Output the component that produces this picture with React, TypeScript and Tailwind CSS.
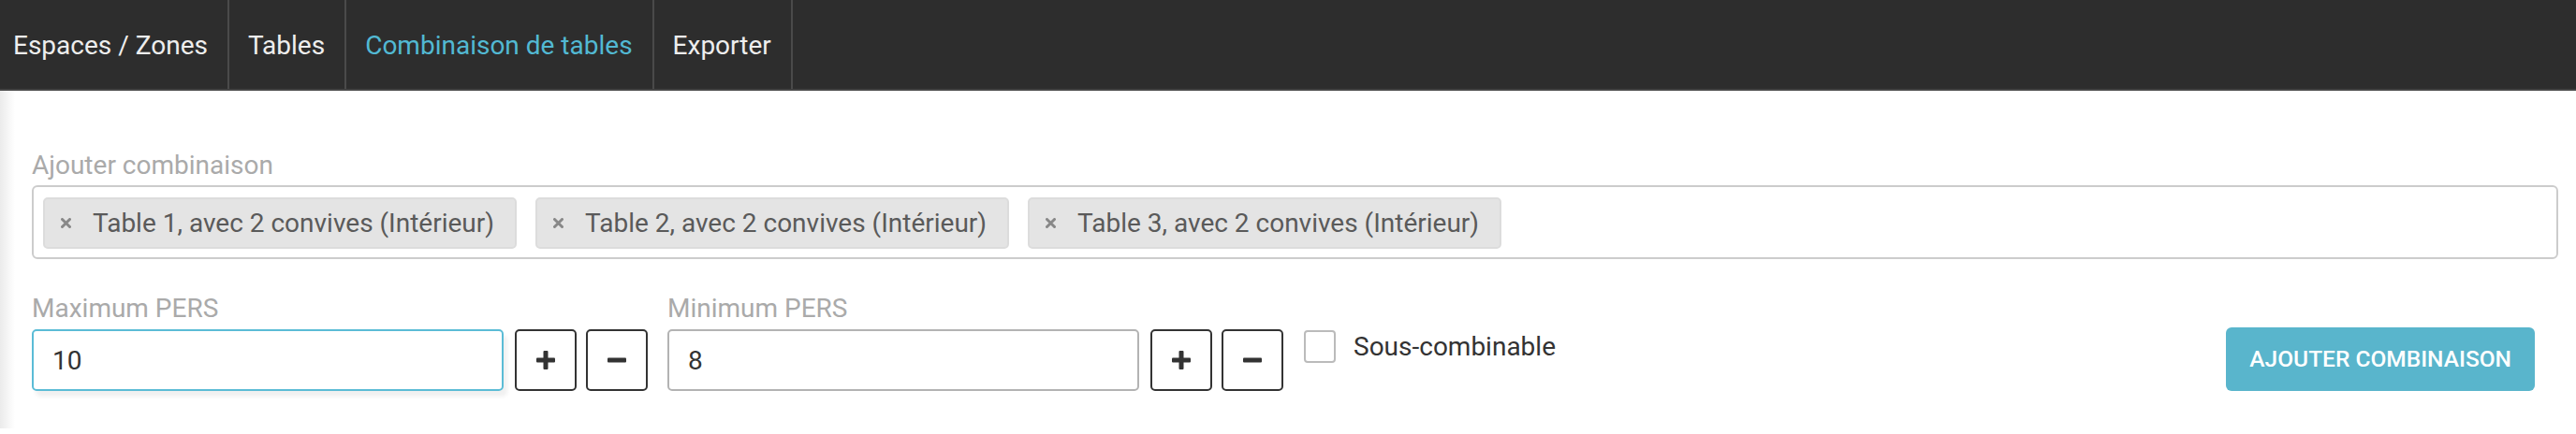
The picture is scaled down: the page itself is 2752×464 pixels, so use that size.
import React, { useState } from 'react';

const tabs = ['Espaces / Zones', 'Tables', 'Combinaison de tables', 'Exporter'];

const tags = [
  'Table 1, avec 2 convives (Intérieur)',
  'Table 2, avec 2 convives (Intérieur)',
  'Table 3, avec 2 convives (Intérieur)',
];

const PlusIcon = () => (
  <svg width="20" height="20" viewBox="0 0 20 20" fill="#333">
    <rect x="7.5" y="0" width="5" height="20" rx="1" />
    <rect x="0" y="7.5" width="20" height="5" rx="1" />
  </svg>
);

const MinusIcon = () => (
  <svg width="20" height="20" viewBox="0 0 20 20" fill="#333">
    <rect x="0" y="7.5" width="20" height="5" rx="1" />
  </svg>
);

const CrossIcon = () => (
  <svg width="11" height="11" viewBox="0 0 11 11" stroke="#888" strokeWidth="3" strokeLinecap="round">
    <path d="M1.5 1.5l8 8M9.5 1.5l-8 8" />
  </svg>
);

const StepButton = ({ children, onClick }: { children: React.ReactNode; onClick: () => void }) => (
  <button
    onClick={onClick}
    className="w-[66px] h-[66px] shrink-0 flex items-center justify-center bg-white border-2 border-[#333] rounded-[5px]"
  >
    {children}
  </button>
);

const NumberField = ({
  label,
  value,
  setValue,
  focused,
}: {
  label: string;
  value: number;
  setValue: (v: number) => void;
  focused?: boolean;
}) => (
  <div className="flex flex-col">
    <label className="text-[28px] leading-[36px] text-[#aaa] mb-[4px]">{label}</label>
    <div className="flex items-center">
      <input
        value={value}
        onChange={e => setValue(Number(e.target.value) || 0)}
        className={`w-[504px] h-[66px] px-[20px] text-[28px] text-[#333] rounded-[5px] border-2 outline-none ${
          focused ? 'border-[#5bbcd6] shadow-[4px_6px_4px_rgba(0,0,0,0.06)]' : 'border-[#b3b3b3]'
        }`}
      />
      <div className="flex items-center gap-[10px] ml-[12px]">
        <StepButton onClick={() => setValue(value + 1)}>
          <PlusIcon />
        </StepButton>
        <StepButton onClick={() => setValue(Math.max(0, value - 1))}>
          <MinusIcon />
        </StepButton>
      </div>
    </div>
  </div>
);

export default function App() {
  const [active, setActive] = useState(2);
  const [items, setItems] = useState(tags);
  const [max, setMax] = useState(10);
  const [min, setMin] = useState(8);
  const [sub, setSub] = useState(false);

  return (
    <div className="min-h-[464px] bg-white font-['Roboto','Liberation_Sans',sans-serif]">
      <nav className="flex h-[97px] bg-[#2d2d2d] border-b-2 border-[#444]">
        {tabs.map((t, i) => (
          <button
            key={t}
            onClick={() => setActive(i)}
            className={`h-full flex items-center pt-[2px] pr-[21px] border-r-2 border-[#4a4a4a] text-[28px] ${
              i === 0 ? 'pl-[14px]' : 'pl-[20px]'
            } ${active === i ? 'text-[#52b9d3]' : 'text-[#eeeeee]'}`}
          >
            {t}
          </button>
        ))}
      </nav>

      <main className="pt-[62px] pb-[40px] pl-[34px] pr-[19px] bg-[linear-gradient(to_right,#ebebeb_0px,#ffffff_16px)]">
        <label className="block text-[28px] leading-[36px] text-[#aaa] mb-[3px]">Ajouter combinaison</label>
        <div className="h-[79px] flex items-start gap-[20px] pt-[11px] pl-[10px] border-2 border-[#ccc] rounded-[6px] bg-white">
          {items.map(t => (
            <span
              key={t}
              className="h-[55px] flex items-center pl-[17px] pr-[22px] bg-[#e4e4e4] border-2 border-[#dcdcdc] rounded-[5px] text-[28px] text-[#5a5a5a]"
            >
              <button onClick={() => setItems(items.filter(x => x !== t))} className="mr-[23px] flex items-center">
                <CrossIcon />
              </button>
              {t}
            </span>
          ))}
        </div>

        <div className="flex items-start mt-[35px]">
          <NumberField label="Maximum PERS" value={max} setValue={setMax} focused />
          <div className="ml-[21px]">
            <NumberField label="Minimum PERS" value={min} setValue={setMin} />
          </div>
          <label className="flex items-start ml-[22px] mt-[41px] cursor-pointer">
            <span
              onClick={() => setSub(!sub)}
              className={`w-[34px] h-[35px] border-2 border-[#bbb] rounded-[4px] ${sub ? 'bg-[#52b9d3]' : 'bg-white'}`}
            />
            <span className="ml-[19px] text-[28px] leading-[36px] text-[#333]">Sous-combinable</span>
          </label>
          <button className="ml-auto mr-[25px] mt-[38px] h-[68px] px-[25px] bg-[#59b5cc] text-white text-[24.5px] font-medium uppercase rounded-[6px]">
            Ajouter combinaison
          </button>
        </div>
      </main>
    </div>
  );
}
